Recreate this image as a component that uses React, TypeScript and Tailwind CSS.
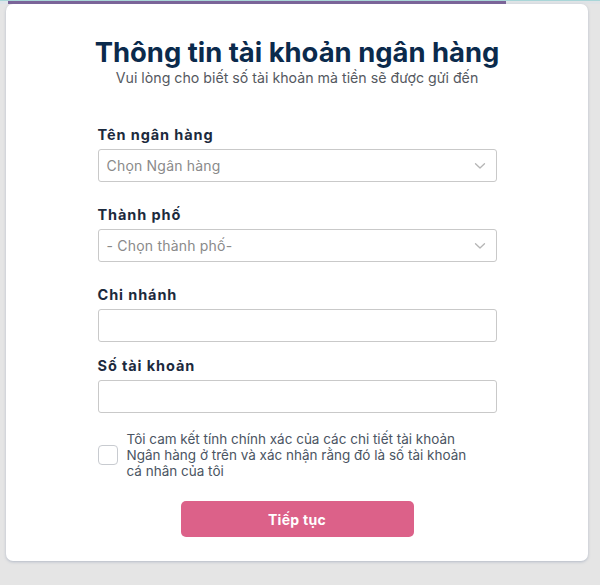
import React from "react";

function Chevron() {
  return (
    <svg width="12" height="8" viewBox="0 0 12 8" fill="none" className="shrink-0">
      <path d="M1.5 1.8 L6 6 L10.5 1.8" stroke="#b5b5b5" strokeWidth="1.3" strokeLinecap="round" strokeLinejoin="round" />
    </svg>
  );
}

function Label({ children }: { children: React.ReactNode }) {
  return (
    <div className="text-[14.5px] font-bold leading-[16px] tracking-[0.9px] text-[#1c2a3d] mb-[6px]">
      {children}
    </div>
  );
}

function Select({ placeholder }: { placeholder: string }) {
  return (
    <div className="h-[33px] w-full border border-[#c9c9c9] rounded-[3px] flex items-center justify-between pl-[8px] pr-[10px] bg-white">
      <span className="text-[14px] text-[#8a8a8a] tracking-[0.2px]">{placeholder}</span>
      <Chevron />
    </div>
  );
}

function Input() {
  return <div className="h-[33px] w-full border border-[#c9c9c9] rounded-[3px] bg-white" />;
}

export default function App() {
  return (
    <div
      className="w-[600px] h-[585px] bg-[#e5e5e5] flex flex-col overflow-hidden"
      style={{ fontFamily: "Inter, 'Noto Sans', sans-serif" }}
    >
      <div className="h-[1px] w-full bg-[#a9d6d8]" />
      <div className="h-[3px] w-full flex">
        <div className="w-[8px] bg-[#dfe5ea]" />
        <div className="w-[498px] bg-[#7b6499]" />
        <div className="flex-1 bg-[#dfe3e6]" />
      </div>
      <div className="ml-[6px] w-[582px] h-[557px] bg-white rounded-[7px] shadow-[0_1px_3px_rgba(120,135,165,0.45)] flex flex-col items-center">
        <h1 className="mt-[32px] text-[27.4px] leading-[33px] font-bold text-[#0b2a4c]">
          Thông tin tài khoản ngân hàng
        </h1>
        <p className="mt-[0px] text-[14.2px] leading-[18px] text-[#55595f]">
          Vui lòng cho biết số tài khoản mà tiền sẽ được gửi đến
        </p>

        <div className="w-[399px] mt-[40px] flex flex-col">
          <Label>Tên ngân hàng</Label>
          <Select placeholder="Chọn Ngân hàng" />
          <div className="h-[25px]" />
          <Label>Thành phố</Label>
          <Select placeholder="- Chọn thành phố-" />
          <div className="h-[25px]" />
          <Label>Chi nhánh</Label>
          <Input />
          <div className="h-[16px]" />
          <Label>Số tài khoản</Label>
          <Input />

          <div className="mt-[18px] flex items-center gap-[9px]">
            <div className="w-[20px] h-[20px] border-[1.5px] border-[#c8cbd0] rounded-[4px] shrink-0" />
            <div className="text-[13.5px] leading-[16px] text-[#4b5563] w-[358px]">
              Tôi cam kết tính chính xác của các chi tiết tài khoản Ngân hàng ở trên và xác nhận rằng đó là số tài khoản cá nhân của tôi
            </div>
          </div>

          <div className="mt-[22px] flex justify-center">
            <button className="w-[233px] h-[36px] rounded-[5px] bg-[#dc6189] text-white text-[14px] font-bold tracking-[0.3px]">
              Tiếp tục
            </button>
          </div>
        </div>
      </div>
    </div>
  );
}
